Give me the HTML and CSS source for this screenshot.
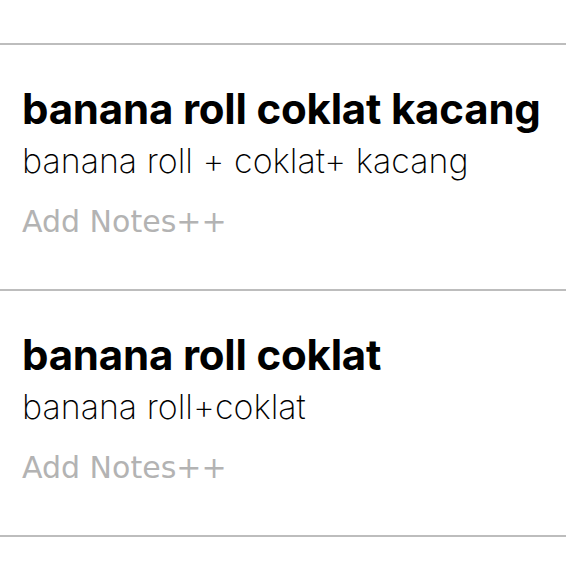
FILE: index.html
```html
<!DOCTYPE html>
<html>
<head>
<meta charset="utf-8">
<link rel="stylesheet" href="styles.css">
</head>
<body>
<div class="top"></div>
<ul class="list">
  <li class="item">
    <div class="title">banana roll coklat kacang</div>
    <div class="desc">banana roll + coklat+ kacang</div>
    <div class="notes">Add Notes++</div>
  </li>
  <li class="item">
    <div class="title">banana roll coklat</div>
    <div class="desc">banana roll+coklat</div>
    <div class="notes">Add Notes++</div>
  </li>
</ul>
</body>
</html>
```
FILE: styles.css
```css
html, body {
  margin: 0;
  padding: 0;
  background: #ffffff;
}
.top {
  height: 43px;
}
.list {
  list-style: none;
  margin: 0;
  padding: 0;
  border-bottom: 2px solid #bdbdbd;
}
.item {
  border-top: 2px solid #bdbdbd;
  height: 244px;
  box-sizing: content-box;
  padding: 0 0 0 22px;
  display: flex;
  flex-direction: column;
}
.title {
  font-family: Inter, "Liberation Sans", sans-serif;
  font-weight: 700;
  font-size: 42px;
  line-height: 50px;
  color: #000;
  margin-top: 39px;
  letter-spacing: -0.2px;
}
.desc {
  font-family: Inter, "Liberation Sans", sans-serif;
  font-weight: 200;
  font-size: 34px;
  line-height: 40px;
  color: #000;
  margin-top: 7px;
}
.notes {
  font-family: "DejaVu Sans", sans-serif;
  font-weight: 400;
  font-size: 30px;
  line-height: 40px;
  color: #b3b3b3;
  margin-top: 21px;
}
```
